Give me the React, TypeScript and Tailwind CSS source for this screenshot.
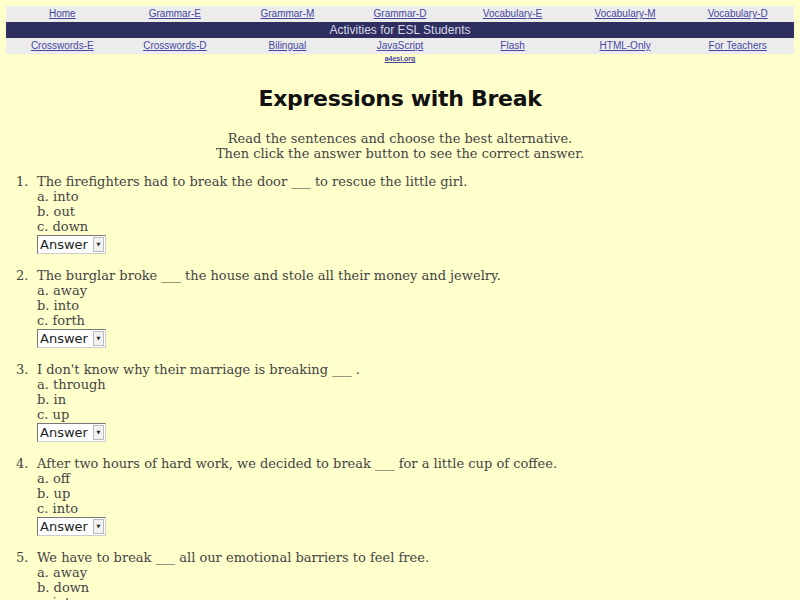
import React from 'react'

const topLinks = ['Home', 'Grammar-E', 'Grammar-M', 'Grammar-D', 'Vocabulary-E', 'Vocabulary-M', 'Vocabulary-D']
const bottomLinks = ['Crosswords-E', 'Crosswords-D', 'Bilingual', 'JavaScript', 'Flash', 'HTML-Only', 'For Teachers']

const questions = [
  { q: 'The firefighters had to break the door ___ to rescue the little girl.', opts: ['into', 'out', 'down'] },
  { q: 'The burglar broke ___ the house and stole all their money and jewelry.', opts: ['away', 'into', 'forth'] },
  { q: "I don't know why their marriage is breaking ___ .", opts: ['through', 'in', 'up'] },
  { q: 'After two hours of hard work, we decided to break ___ for a little cup of coffee.', opts: ['off', 'up', 'into'] },
  { q: 'We have to break ___ all our emotional barriers to feel free.', opts: ['away', 'down', 'into'] },
]

function NavRow({ links }: { links: string[] }) {
  return (
    <div className="grid h-[16px] grid-cols-7 items-center bg-[#ececec]">
      {links.map((l) => (
        <a key={l} href="#" className="text-center text-[10px] leading-none text-[#4646a0] underline">
          {l}
        </a>
      ))}
    </div>
  )
}

export default function App() {
  return (
    <div className="h-[600px] overflow-hidden bg-[#ffffcc] pt-[6px] font-['DejaVu_Serif',serif] text-[#444]">
      <div className="mx-[6px] font-['Liberation_Sans',Arial,sans-serif]">
        <NavRow links={topLinks} />
        <div className="flex h-[16px] items-center justify-center bg-[#2e2e5f] text-[12px] text-[#d8d8e8]">
          Activities for ESL Students
        </div>
        <NavRow links={bottomLinks} />
        <div className="mt-[1px] text-center text-[7px] font-bold leading-[8px] text-[#4646a0] underline">a4esl.org</div>
      </div>

      <h1 className="mt-[21px] text-center font-['DejaVu_Sans',sans-serif] text-[22px] font-bold leading-[30px] tracking-[-0.3px] text-[#111]">
        Expressions with Break
      </h1>

      <div className="mt-[17px] text-center text-[13px] leading-[15px]">
        <p>Read the sentences and choose the best alternative.</p>
        <p>Then click the answer button to see the correct answer.</p>
      </div>

      <ol className="mt-[13px] text-[13px] leading-[15px]">
        {questions.map((item, i) => (
          <li key={i} className="mb-[14px] flex">
            <span className="w-[37px] shrink-0 pl-[16px]">{i + 1}.</span>
            <div>
              <p>{item.q}</p>
              {item.opts.map((o, j) => (
                <p key={o}>
                  {'abc'[j]}. {o}
                </p>
              ))}
              <div className="mt-[1px] flex h-[19px] w-[69px] items-center border border-[#777] border-b-[#ccc] border-r-[#ccc] bg-white pl-[2px] text-[13px] leading-none text-[#222]">
                <span className="flex-1 font-['DejaVu_Sans',sans-serif] text-[13px]">Answer</span>
                <span className="mr-[1px] flex h-[15px] w-[11px] items-center justify-center border border-[#bbb] bg-[#f2f2f2] text-[5px]">▼</span>
              </div>
            </div>
          </li>
        ))}
      </ol>
    </div>
  )
}
